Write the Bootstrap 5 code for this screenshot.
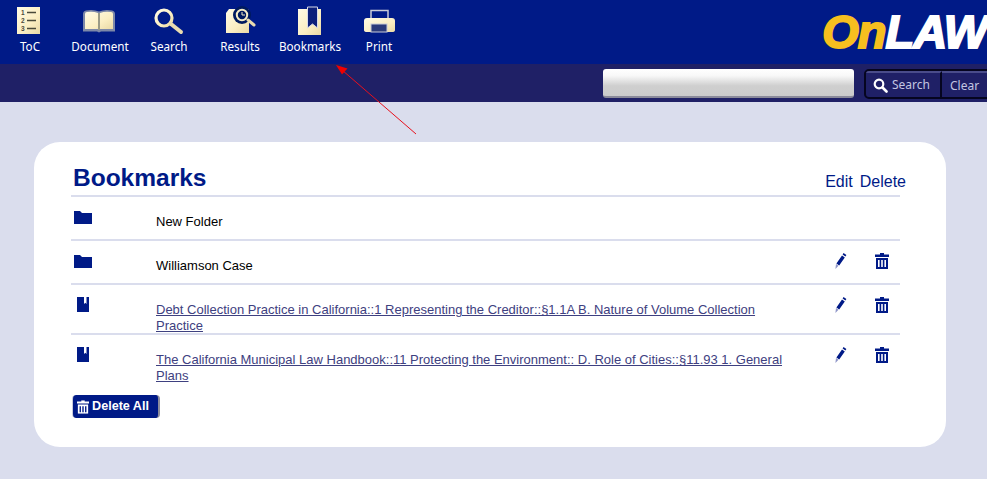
<!DOCTYPE html>
<html lang="en">
<head>
<meta charset="utf-8">
<title>Bookmarks</title>
<link href="https://cdn.jsdelivr.net/npm/bootstrap@5.3.0/dist/css/bootstrap.min.css" rel="stylesheet">
<style>
html,body{height:479px;overflow:hidden}
body{background:#dadded;font-family:"Liberation Sans",Arial,sans-serif;position:relative}
.topbar{height:64px;background:#001a87;overflow:hidden}
.tool{color:#fff;font:11.7px/16px "Noto Sans",sans-serif;text-decoration:none;white-space:nowrap;height:64px;padding-top:6px}
.tool svg{display:block;margin-bottom:2px}
.w1{width:60px}.w2{width:80px}.w3{width:58px}.w4{width:84px}.w5{width:56px}.w6{width:82px}
.brand{font:italic 900 47px/1 "Liberation Sans",sans-serif;letter-spacing:-1px;-webkit-text-stroke:2px currentColor;color:#fff;padding-top:8px;white-space:nowrap}
.brand span{color:#f6bf1f}
.subbar{height:38px;background:#1f2066;padding-top:5px}
.search-field{width:251px;height:29px;border:0;border-bottom:2px solid #8a8a9a;border-radius:3px;background:linear-gradient(#fff 0,#f8f8f8 25%,#cfcfcf 62%,#cbcbcb 100%);padding:0 6px}
.search-btns{margin-left:10px;margin-right:-5px;height:30px;border:2px solid #05051f;border-radius:5px;overflow:hidden;background:#1f2066}
.search-btns .btn{--bs-btn-padding-x:0;--bs-btn-padding-y:0;--bs-btn-border-width:0;--bs-btn-border-radius:0;--bs-btn-color:#c3c6e2;--bs-btn-hover-color:#c3c6e2;font:12px/26px "Noto Sans",sans-serif;height:26px;border-top:2px solid #4a4c8a}
.b-s{width:76px;border-right:2px solid #05051f!important;padding-right:3px!important}
.b-c{width:48px;text-align:left;padding-left:8px!important}
.panel{margin:40px 41px 0 34px;height:305px;background:#fff;border-radius:26px;padding:20px 46px 0 37px}
.panel-head{height:33px;padding:0 0 0 2px}
.panel-head h1{font:bold 24.500px/32px "Liberation Sans",sans-serif;color:#001a87;margin:0}
.panel-acts{color:#001a87;font-size:16px;line-height:20px;margin-right:-6px;padding-top:10px}
.panel-acts a{color:#001a87;text-decoration:none;margin-left:7px}
.entry{border-top:2px solid #dadded;padding-top:17px;font-size:13px;line-height:16px;letter-spacing:0;color:#000;display:flex}
.h-a{height:44px}.h-b{height:44px}.h-c{height:50px}.h-d{height:50px}
.e-icon{width:85px;flex:none;margin-top:-4px;padding-left:3px}
.e-icon svg{display:block}
.e-icon .bk-mark{margin:-1px 0 0 3px}
.e-text{flex:1 1 auto;padding-right:22px;min-width:0}
.e-text a{color:#3e4080}
.e-acts{width:82px;flex:none;display:flex;margin:-5px -2px 0 0}
.e-acts a{display:block;flex:none;width:41px;text-align:center;line-height:0;color:#001a87}
.del-all{--bs-btn-padding-x:0;--bs-btn-padding-y:0;--bs-btn-border-width:0;--bs-btn-bg:#001a87;--bs-btn-color:#fff;--bs-btn-hover-bg:#001a87;--bs-btn-hover-color:#fff;--bs-btn-border-radius:4px;width:88px;height:23px;margin-top:12px;margin-left:1px;padding-right:5px;font:bold 12.600px/23px "Liberation Sans",sans-serif;border-right:2px solid #8d8d9c;border-left:1px solid #c9cbdc;display:flex;align-items:center;justify-content:center;gap:3px}
.pointer{position:absolute;left:330px;top:60px;pointer-events:none}
</style>
</head>
<body>
<svg width="0" height="0" class="position-absolute">
<defs>
<linearGradient id="cr" x1="0" y1="0" x2="1" y2="1"><stop offset="0" stop-color="#fffbe6"/><stop offset=".6" stop-color="#fbeec2"/><stop offset="1" stop-color="#e9d9a6"/></linearGradient>
<symbol id="trash" viewBox="0 0 14 16"><path fill="currentColor" d="M5 0h4v1.500h5V4H0V1.500h5zM1 5h12v11H1zm2 2v7h1.600V7zm3.200 0v7h1.600V7zm3.200 0v7H11V7z" fill-rule="evenodd"/></symbol>
<symbol id="pen" viewBox="0 0 12 16"><path fill="#001a87" d="M8.600 0l2.800 2-1 1.600-2.800-2zM7 2.400l2.800 2-5.600 8L1.400 10.400z"/><path fill="#8f96c8" d="M1 11l2.500 1.800L.4 16z"/></symbol>
</defs>
</svg>

<header class="topbar d-flex justify-content-between">
<nav class="d-flex">
<a href="#" class="tool w1 d-flex flex-column align-items-center"><svg width="40" height="30" viewBox="0 0 40 30"><rect x="7" y="1" width="23" height="27" fill="url(#cr)"/><g fill="#4a4a3a" font-family="Liberation Sans" font-size="6.500" font-weight="700"><text x="11" y="9">1</text><text x="11" y="17">2</text><text x="11" y="25">3</text></g><path d="M17 6.500h9M17 14.500h9M17 22.500h9" stroke="#4a4a3a" stroke-width="1.500"/></svg>ToC</a>
<a href="#" class="tool w2 d-flex flex-column align-items-center"><svg width="40" height="30" viewBox="0 0 40 30"><path d="M3 25.500V8q0-3 3-3.500 7-1.500 13 1 6-2.500 13-1 3 .5 3 3.500v17.500H21l-2 1-2-1z" fill="#7d88a8"/><path d="M5 23V8q0-2 2-2 6-1 11 1v16zM20 7q5-2 11-1 2 0 2 2v15H20z" fill="url(#cr)"/><path d="M18 7h2v17h-2z" fill="#9a9a86"/></svg>Document</a>
<a href="#" class="tool w3 d-flex flex-column align-items-center"><svg width="40" height="30" viewBox="0 0 40 30"><circle cx="15" cy="12" r="8" fill="none" stroke="url(#cr)" stroke-width="3.200"/><path d="M22 18l10 8" stroke="#e9dcb0" stroke-width="4" stroke-linecap="round"/></svg>Search</a>
<a href="#" class="tool w4 d-flex flex-column align-items-center"><svg width="40" height="30" viewBox="0 0 40 30"><path d="M9 3h20v24H6V7z" fill="url(#cr)"/><circle cx="22" cy="9" r="9" fill="#001a5f"/><circle cx="22" cy="9" r="5.200" fill="none" stroke="#f6ecc6" stroke-width="2"/><path d="M22 6v3h3" fill="none" stroke="#f6ecc6" stroke-width="1"/><path d="M28 14l6 5" stroke="#e9dcb0" stroke-width="3" stroke-linecap="round"/></svg>Results</a>
<a href="#" class="tool w5 d-flex flex-column align-items-center"><svg width="40" height="30" viewBox="0 0 40 30"><rect x="8" y="3" width="23" height="26" fill="url(#cr)"/><path d="M17.500 1h10v21l-5-4-5 4z" fill="#0c1f7a" stroke="#d8dae8" stroke-width="1"/></svg>Bookmarks</a>
<a href="#" class="tool w6 d-flex flex-column align-items-center"><svg width="40" height="30" viewBox="0 0 40 30"><rect x="12" y="4.500" width="17" height="9" fill="#001a87" stroke="#c9cbd8" stroke-width="1.500"/><path d="M8 12h25q3 0 3 3v9q0 2-3 2H8q-3 0-3-2v-9q0-3 3-3z" fill="url(#cr)"/><rect x="12" y="18" width="16" height="8" fill="#2b3a7a" stroke="#c9cbd8"/></svg>Print</a>
</nav>
<div class="brand"><span>On</span>LAW</div>
</header>

<div class="subbar d-flex justify-content-end align-items-start overflow-hidden">
<input class="search-field" type="text" aria-label="Search">
<div class="search-btns d-flex">
<button class="btn b-s d-flex align-items-center justify-content-center gap-1"><svg width="15" height="15" viewBox="0 0 15 15"><circle cx="6" cy="6" r="4.300" fill="none" stroke="#fff" stroke-width="2.200"/><path d="M9.500 9.500l4 4" stroke="#fff" stroke-width="2.600" stroke-linecap="round"/></svg>Search</button>
<button class="btn b-c">Clear</button>
</div>
</div>

<main class="panel">
<div class="panel-head d-flex justify-content-between">
<h1>Bookmarks</h1>
<div class="panel-acts"><a href="#">Edit</a><a href="#">Delete</a></div>
</div>

<div class="entry h-a">
<div class="e-icon"><svg width="18" height="14" viewBox="0 0 18 14"><path fill="#001a87" d="M0 1h6l2 2h10v11H0z"/></svg></div>
<div class="e-text">New Folder</div>
</div>
<div class="entry h-b">
<div class="e-icon"><svg width="18" height="14" viewBox="0 0 18 14"><path fill="#001a87" d="M0 1h6l2 2h10v11H0z"/></svg></div>
<div class="e-text">Williamson Case</div>
<div class="e-acts"><a href="#"><svg width="12" height="16"><use href="#pen"/></svg></a><a href="#"><svg width="14" height="16"><use href="#trash"/></svg></a></div>
</div>
<div class="entry h-c">
<div class="e-icon"><svg class="bk-mark" width="12" height="16" viewBox="0 0 12 16"><path fill="#001a87" d="M0 0h12v15H0z"/><path fill="#fff" d="M7 0h2.500v7l-1.200-1.200L7 7z"/></svg></div>
<div class="e-text"><a href="#">Debt Collection Practice in California::1 Representing the Creditor::§1.1A B. Nature of Volume Collection Practice</a></div>
<div class="e-acts"><a href="#"><svg width="12" height="16"><use href="#pen"/></svg></a><a href="#"><svg width="14" height="16"><use href="#trash"/></svg></a></div>
</div>
<div class="entry h-d">
<div class="e-icon"><svg class="bk-mark" width="12" height="16" viewBox="0 0 12 16"><path fill="#001a87" d="M0 0h12v15H0z"/><path fill="#fff" d="M7 0h2.500v7l-1.200-1.200L7 7z"/></svg></div>
<div class="e-text"><a href="#">The California Municipal Law Handbook::11 Protecting the Environment:: D. Role of Cities::§11.93 1. General Plans</a></div>
<div class="e-acts"><a href="#"><svg width="12" height="16"><use href="#pen"/></svg></a><a href="#"><svg width="14" height="16"><use href="#trash"/></svg></a></div>
</div>
<button class="btn del-all"><svg width="12" height="14" viewBox="0 0 14 16" color="#fff"><use href="#trash"/></svg>Delete All</button>
</main>

<svg class="pointer" width="90" height="76" viewBox="330 60 90 76"><path d="M416 134L342 70" stroke="#e8101c" fill="none"/><path d="M336 65l11.500 3.500-5.500 6z" fill="#f00000"/></svg>
</body>
</html>
